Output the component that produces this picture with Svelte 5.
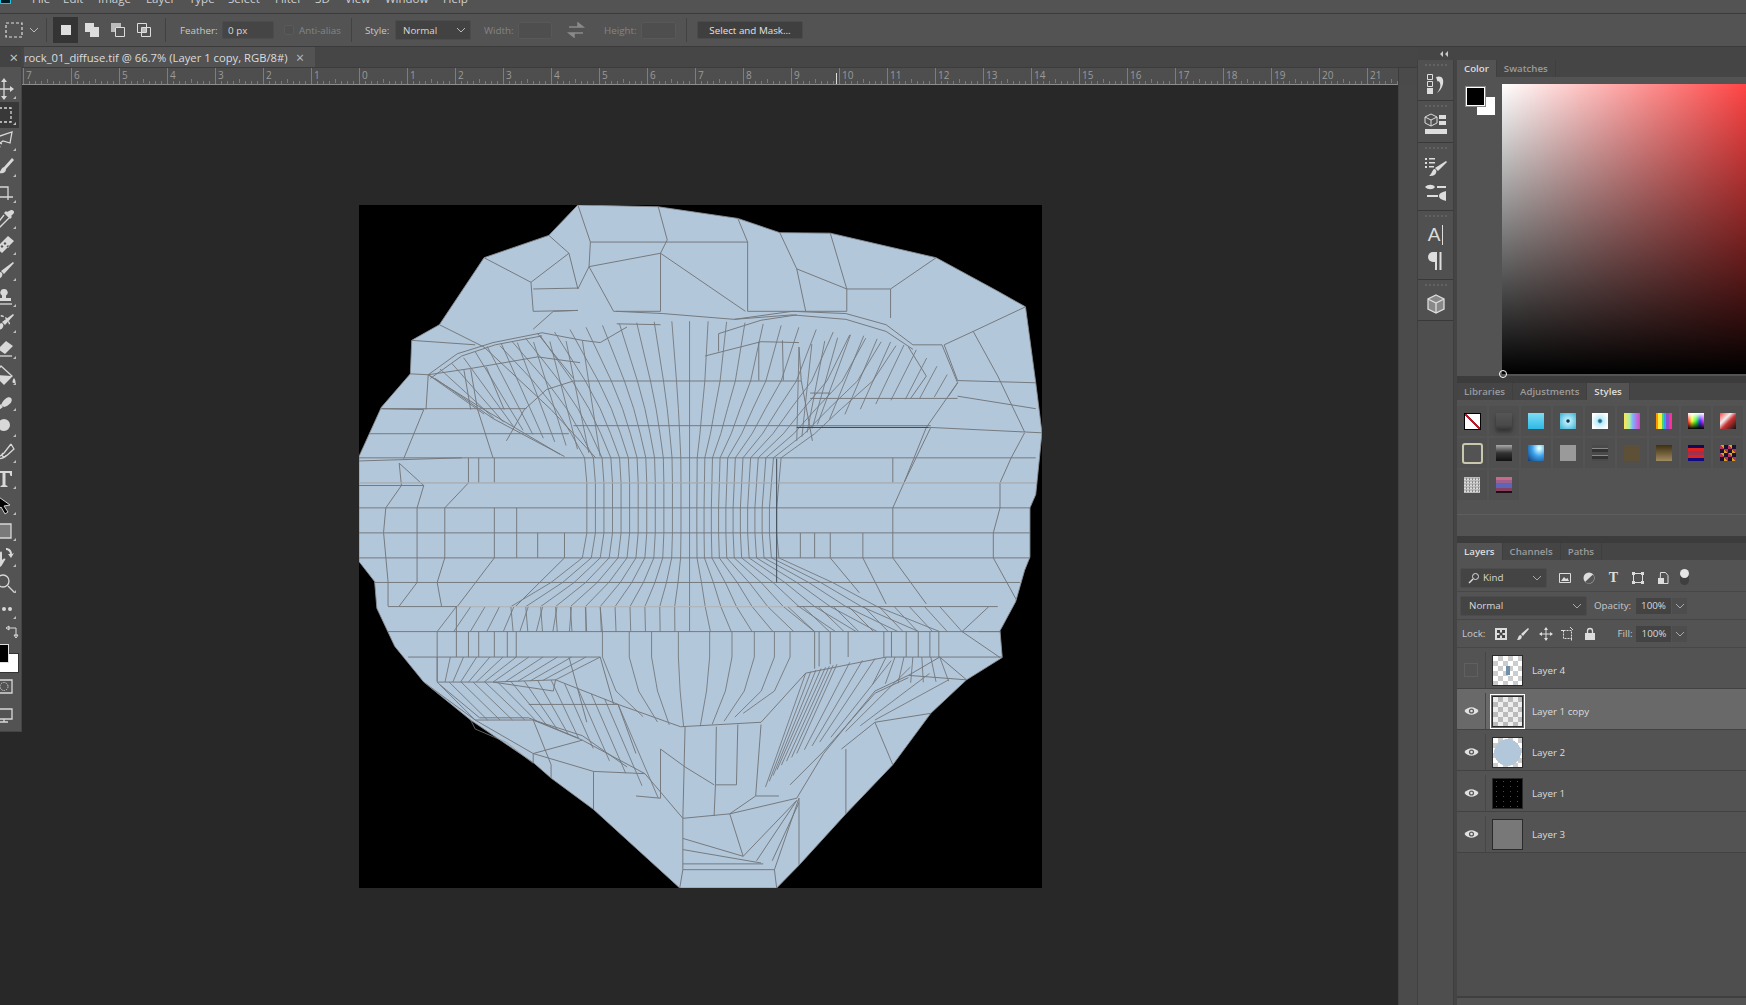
<script>
  const menu = [['File',31],['Edit',35],['Image',48],['Layer',43],['Type',39],['Select',47],['Filter',40],['3D',30],['View',40],['Window',58],['Help',40]];

  const tools = [
    { s:'M10 3v18M1 12h18', f:'M10 1l-3 4h6zM10 23l-3-4h6zM0 12l4-3v6zM20 12l-4-3v6z' },
    { d:'M0 5h17v14H0z', sel:true },
    { s:'M0 9L18 3L16 14L9 12L0 18M5 16c2 2-1 5-3 5M2 12l6 3' },
    { f:'M18 3l2 2-8 9c0 4-4 5-7 4 2-2 2-5 5-6z', d:'M3 7c-3 2-4 8 0 11' },
    { s:'M4 3v13h15M0 6h14v13', w:2 },
    { f:'M17 3a2.5 2.5 0 0 1 3 3l-3 3 1 1-2 2-6-6 2-2 1 1z', s:'M10 8L3 17v3h3l9-9' },
    { f:'M2 15L14 3l6 5L8 20zM11 9l-1.5 1.5L11 12l1.5-1.5zM8 12l-1.5 1.5L8 15l1.500-1.500zM14 12l-1.500 1.500L14 15l1.500-1.500z' },
    { f:'M19 3l1 1-10 11-3-3zM6 13c2 0 3 2 2 4-1 3-5 3-7 2 2-1 2-4 5-6z' },
    { f:'M10 4a3.500 3.500 0 0 1 2 6.500V13h5v3H3v-3h5v-2.500A3.500 3.500 0 0 1 10 4z', s:'M2 19h16' },
    { f:'M19 3l1 1-9 10-3-3zM7 12c2 0 3 2 2 4-1 3-5 3-7 2 2-1 2-4 5-6z', d:'M2 6c4-3 12-1 14 9' },
    { f:'M12 4l7 5-8 8-7-5z', s:'M0 19h18' },
    { s:'M7 3L18 13L10 21L0 11z', f:'M20 15c2 3 2 5 0 5s-2-2 0-5zM2 12L18 13L10 21z' },
    { f:'M7 16c3-7 8-9 10-7s0 7-7 9zM6 15l3 3-4 3-2-2z' },
    { f:'M4 10a6 6 0 1 0 12 0a6 6 0 1 0-12 0z', s:'M6 15l-6 3' },
    { s:'M17 3L10 12C6 16 2 16 0 15M17 3l3 5C15 12 12 18 2 18M9 12a2 2 0 1 0 3 2' },
    { f:'M2 4h16v5h-1.500l-1-3H11.500v12l2 1v1h-7v-1l2-1V6H4.500l-1 3H2z' },
    { k:'M2 2v16l5-4 4 7 3-2-4-6 6-1z' },
    { g:'M-2 5h19v14H-2z' },
    { f:'M0 14c0-3 1-3 2-1V9c0-2 2-2 2 0v-2c0-2 2-2 2 0v1c0-2 2-2 2 0v7c3-3 4-1 3 0l-3 5c-1 2-2 2-4 2-3 0-4-1-4-3zM12 3c3 0 6 2 6 6l2-1-3 5-3-4 2 0c0-2-2-4-4-4z' },
    { s:'M3 10a6 6 0 1 0 12 0a6 6 0 1 0-12 0M14 15l6 6', w:2 },
    { f:'M8 12a2 2 0 1 0 4 0a2 2 0 1 0-4 0zM14 12a2 2 0 1 0 4 0a2 2 0 1 0-4 0z' }
  ];

  const rulerNums = [];
  for (let i = -7; i <= 21; i++) rulerNums.push(i);
  const subTicks = [];
  for (let i = 0; i < 28 * 8 + 6; i++) if (i % 8) subTicks.push(i);

  const outline = '510,12 690,16 868,42 962,74 1075,75 1312,130 1450,205 1512,240 1535,410 1549,522 1535,660 1522,690 1522,800 1510,830 1490,900 1455,965 1460,1025 1380,1075 1300,1150 1215,1265 1110,1375 1005,1490 955,1541 738,1541 545,1365 450,1295 410,1260 270,1165 165,1080 100,1000 60,915 55,855 20,810 20,575 70,465 135,390 138,315 200,280 300,130 445,80';

  const explicit = [
    '510,12 538,95 535,150 510,200','690,16 710,90 695,120 695,250','868,42 890,95 890,250','962,74 1000,155 1020,250',
    '1075,75 1112,200 1112,250','1312,130 1210,200 1210,265','1512,240 1395,295 1330,325','1395,295 1450,395 1510,520',
    '300,130 405,185 410,250','445,80 490,120 510,200','490,120 405,185','538,95 890,95','535,150 695,120 885,250','535,150 590,250 695,250',
    '410,200 510,198','410,250 510,248 455,250 410,290','890,250 1112,250','1000,155 1112,200 1210,200','200,280 300,330','138,315 280,325','135,390 175,392',
    '175,392 240,345 320,320 430,298 520,315 560,320 620,285','595,250 700,255 860,268 990,250 1110,255 1200,280 1260,325 1325,325 1360,410','597,278 695,280','825,300 825,340',
    '795,350 920,318 1005,320','915,318 915,405','968,315 970,405','1005,330 1010,405','1030,433 1075,433','1360,405 1535,410','1360,440 1535,468','1300,510 1549,522',
    '110,590 115,640 80,690 75,745 85,855 85,910','110,590 165,640 150,690 150,857 110,910','165,470 120,580','175,392 170,470','212,690 265,634 265,578','212,690 212,802 195,857 205,911',
    '288,578 288,634','323,578 323,634','323,690 323,802 240,911','373,690 373,802','420,746 420,802','480,746 480,802 370,911',
    '1215,578 1215,634','1215,690 1215,802','1455,634 1455,690 1440,746 1440,802 1500,911','1510,522 1480,578 1455,634','1148,746 1148,802','1075,746 1075,802','1040,746 1040,802','1008,746 1008,802',
    '1215,802 1290,905','1148,802 1200,905','1075,802 1140,880','1240,634 1215,690','1300,510 1240,634',
    '195,967 195,1078','238,911 238,1024','265,967 265,1024','288,967 288,1024','323,967 323,1024','352,967 352,1024','372,967 372,1024',
    '1040,967 1040,1050','1050,967 1050,1045','1075,967 1075,1040','1115,967 1115,1024','1195,967 1195,1024','1212,967 1212,1024','1245,967 1245,1024','1272,967 1272,1024','1298,967 1298,1024','1318,967 1318,1024',
    '1370,967 1455,1025','1370,967 1430,911','1320,1024 1380,1075','165,1080 280,1165 410,1165 520,1210 660,1285 745,1385 850,1375 1000,1340 1060,1240 1175,1100 1250,1065 1320,1024',
    '195,1080 320,1080 460,1075 600,1130 740,1180 920,1170 1020,1060 1200,1024','750,1180 745,1385','820,1180 818,1310 815,1380','920,1175 908,1335 850,1375','868,1175 865,1310','695,1230 695,1340','818,1310 865,1310',
    '745,1385 745,1500 738,1541','955,1541 950,1500 1005,1340','745,1500 950,1500','745,1430 880,1470 1000,1345','850,1375 880,1470','745,1455 920,1485','745,1487 925,1487','910,1480 1000,1345','945,1480 1005,1350','1110,1230 1110,1375','1005,1340 1005,1490','545,1280 545,1365','450,1265 450,1295','410,1240 410,1260',
    '695,1230 750,1270 815,1310','640,1335 695,1340','908,1335 960,1335','1300,1150 1175,1170 1100,1230','1215,1265 1175,1170','1380,1075 1250,1065','20,640 165,640','20,585 250,578','1408,967 1455,967',
    '410,1165 450,1265','520,1210 410,1240 545,1280','660,1285 545,1280','280,1165 410,1240',
    '270,380 285,468 320,578','175,392 270,378 420,352 515,365','300,330 450,470 550,578','420,300 500,400','500,406 440,425 390,470 350,540','255,382 270,470','305,375 345,470','1010,405 1035,540','1360,410 1290,510 1240,634','1330,325 1360,405','1250,330 1290,395 1255,445','70,468 165,470','400,1130 600,1130 640,1240','460,1075 455,1100 320,1080','560,1024 590,1130','490,1024 530,1170',
    '860,268 990,258 1110,268 1200,295 1260,335','825,300 920,270 1000,258','175,392 300,470 470,570','190,400 320,490 480,575','180,400 250,350 325,325 430,305','410,1165 520,1200 620,1270','200,1085 290,1160 400,1160 510,1205','985,1310 1060,1235 1175,1105 1250,1070'
  ];
  const hLines = [[70,395,468],[20,490,524],[500,1300,506],[20,1535,578],[20,1540,634],[20,1522,690],[20,1522,746],[20,1522,802],[55,1500,857],[85,1450,911],[85,1455,967],[130,560,1024],[1200,1460,1024],[500,1010,406],[1030,1360,445],[1000,1300,510]];

  function lerp(ys, vs, y) {
    for (let i = 1; i < ys.length; i++) if (y <= ys[i]) {
      const k = (y - ys[i - 1]) / (ys[i] - ys[i - 1]);
      return vs[i - 1] + k * (vs[i] - vs[i - 1]);
    }
    return vs[vs.length - 1];
  }
  const rowY = [406,468,524,578,634,690,746,802,857,911,967];
  const ctrl = [300,406,468,524,578,634,690,746,802,857,911,967];
  const hL = [450,350,300,265,235,230,230,230,240,310,400,395];
  const hR = [480,410,340,280,205,200,195,195,200,320,420,560];

  const lines = [];
  for (let n = 1; n <= 12; n++) {
    for (const side of [-1, 1]) {
      const t = n / 12;
      const tab = side < 0 ? hL : hR;
      const top = 272 + 55 * t * t;
      const pts = [];
      pts.push(`${760 + side * t * lerp(ctrl, tab, top)},${top}`);
      for (const y of rowY) pts.push(`${(760 + side * t * lerp(ctrl, tab, y)).toFixed(1)},${y}`);
      lines.push(pts.join(' '));
    }
  }
  lines.push('760,272 760,967');
  for (const x of [565,625,675,735,805,855,905,950,985]) {
    const k = (x - 760) / 225;
    lines.push(`${x},967 ${x},1024 ${760 + k * 190},1100 ${760 + k * 120},${1180 - 30 * k * k}`);
  }

  function sample(poly, s) {
    const p = s * (poly.length - 1), i = Math.min(Math.floor(p), poly.length - 2), k = p - i;
    return [poly[i][0] + k * (poly[i + 1][0] - poly[i][0]), poly[i][1] + k * (poly[i + 1][1] - poly[i][1])];
  }
  function fan(a, b, n) {
    for (let j = 0; j <= n; j++) {
      const s = j / n, p = sample(a, s), q = sample(b, s);
      lines.push(`${p[0].toFixed(1)},${p[1].toFixed(1)} ${q[0].toFixed(1)},${q[1].toFixed(1)}`);
    }
  }
  fan([[930,1315],[960,1270],[1000,1240],[1060,1210],[1175,1165]], [[1020,1060],[1060,1048],[1090,1040],[1190,1025],[1340,1075]], 14);
  fan([[195,1080],[320,1080],[460,1075],[600,1130]], [[280,1165],[410,1165],[520,1210],[690,1340]], 14);
  fan([[175,392],[320,322],[520,315]], [[300,480],[420,530],[560,575]], 11);
  fan([[1005,330],[1130,300],[1260,330],[1360,410]], [[1000,540],[1050,500],[1200,450],[1340,440]], 13);
  fan([[238,911],[560,911]], [[195,967],[565,967]], 10);
  fan([[400,1024],[560,1024]], [[320,1080],[460,1075]], 5);
  fan([[980,911],[1320,911]], [[1040,967],[1370,967]], 10);
  fan([[372,1024],[195,1024]], [[300,1080],[195,1080]], 6);
  fan([[1200,1024],[1320,1024]], [[1170,1085],[1340,1078]], 6);
</script>

<div class="app">
  <div class="menubar">
    <div class="logo"></div>
    {#each menu as [label, w]}
      <span class="menuitem" style:width="{w}px">{label}</span>
    {/each}
  </div>

  <div class="options">
    <svg class="mq" width="18" height="18" viewBox="0 0 18 18"><path d="M1 2h16v14H1z" fill="none" stroke="#ddd" stroke-width="1.200" stroke-dasharray="3 2"/></svg>
    <svg class="chev" width="10" height="8" viewBox="0 0 10 8"><path d="M1 2l4 4 4-4" fill="none" stroke="#bbb"/></svg>
    <span class="sep s1"></span>
    <div class="modes">
      <span class="mode on"><svg width="16" height="16" viewBox="0 0 16 16"><rect x="3" y="3" width="10" height="10" fill="#ddd"/></svg></span>
      <span class="mode"><svg width="16" height="16" viewBox="0 0 16 16"><path d="M1 1h9v4h5v10H6v-5H1z" fill="#ddd"/></svg></span>
      <span class="mode"><svg width="16" height="16" viewBox="0 0 16 16"><path d="M1 1h10v4H5v5H1z" fill="#bbb"/><path d="M5.500 5.500h9v9h-9z" fill="none" stroke="#ddd"/></svg></span>
      <span class="mode"><svg width="16" height="16" viewBox="0 0 16 16"><path d="M1.500 1.500h9v9h-9zM5.500 5.500h9v9h-9z" fill="none" stroke="#ddd"/><path d="M6 6h4v4H6z" fill="#bbb"/></svg></span>
    </div>
    <span class="sep s2"></span>
    <span class="lbl feather">Feather:</span>
    <span class="inp feather-in">0 px</span>
    <span class="check"></span>
    <span class="lbl dim aa">Anti-alias</span>
    <span class="sep s3"></span>
    <span class="lbl style">Style:</span>
    <span class="inp select">Normal<svg width="10" height="8" viewBox="0 0 10 8"><path d="M1 2l4 4 4-4" fill="none" stroke="#bbb"/></svg></span>
    <span class="lbl dim width">Width:</span>
    <span class="inp ghost w1"></span>
    <svg class="swap" width="20" height="16" viewBox="0 0 20 16"><path d="M3 5h11M12 1l5 4H12zM17 11H6M8 15l-5-4h5z" fill="#8a8a8a" stroke="#8a8a8a" stroke-width="1.500"/></svg>
    <span class="lbl dim height">Height:</span>
    <span class="inp ghost w2"></span>
    <span class="sep s4"></span>
    <span class="btn">Select and Mask...</span>
  </div>

  <div class="main">
    <div class="workspace">
      <div class="tabbar"><div class="tabgap"></div><div class="tab">rock_01_diffuse.tif @ 66.7% (Layer 1 copy, RGB/8#)<span class="tabx">×</span></div></div>
      <div class="rulerrow">
        <svg class="ruler" width="1376" height="17" viewBox="0 0 1376 17">
          {#each rulerNums as n, i}
            <path d="M{1.500 + i * 48} 0v17" stroke="#7d7d7d"/>
            <text x={4 + i * 48} y="11">{Math.abs(n)}</text>
          {/each}
          {#each subTicks as i}
            <path d="M{1.500 + i * 6} {i % 4 === 0 ? 11 : 13}v4" stroke="#7a7a7a"/>
          {/each}
          <path d="M814.500 5v12" stroke="#ddd"/>
          <path d="M0 16.500h1376" stroke="#8c8c8c"/>
        </svg>
        <div class="rulerend"></div>
      </div>
      <div class="stagerow">
        <div class="stage">
          <svg class="doc" width="683" height="683" viewBox="20 12 1529 1529">
            <defs><clipPath id="rock"><polygon points={outline}/></clipPath></defs>
            <rect x="20" y="12" width="1529" height="1529" fill="#000"/>
            <polygon points={outline} fill="#b3c7db" stroke="#8a8f94" stroke-width="2"/>
            <g clip-path="url(#rock)" fill="none" stroke="#74787c" stroke-width="2.200">
              {#each hLines as [a, b, y]}
                <path d="M{a} {y}H{b}"/>
              {/each}
              {#each lines as p}
                <polyline points={p} stroke-width="2"/>
              {/each}
              {#each explicit as p}
                <polyline points={p}/>
              {/each}
              <path d="M20 634H1540M240 911H1000" stroke="#dfe6ec" stroke-width="1.300"/>
              <path d="M1000 510H1295M955 580V857" stroke="#3d4a57" stroke-width="2.200"/>
            </g>
            <polyline points="270,1165 280,1185 350,1215 410,1262" fill="none" stroke="#8f8f8f" stroke-width="1.500"/>
          </svg>
        </div>
        <div class="vscroll"></div>
      </div>

      <div class="toolbar">
        <div class="toolhead"><span>×</span></div>
        <div class="grip"></div>
        {#each tools as t}
          <div class="tool" class:selected={t.sel}>
            <svg width="24" height="24" viewBox="0 0 24 24">
              {#if t.f}<path class="tf" d={t.f}/>{/if}
              {#if t.s}<path class="ts" d={t.s} stroke-width={t.w || 1.300}/>{/if}
              {#if t.d}<path class="td" d={t.d}/>{/if}
              {#if t.k}<path class="tk" d={t.k}/>{/if}
              {#if t.g}<path class="tg" d={t.g}/>{/if}
              <path class="tc" d="M22 19v3h-3z"/>
            </svg>
          </div>
        {/each}
        <div class="swaprow"><svg width="14" height="14" viewBox="0 0 14 14"><path d="M3 3h8v8M1 3l3-2v4zM11 13l-2-3h4z" fill="none" stroke="#ddd"/></svg></div>
        <div class="colors"><span class="bgc"></span><span class="fgc"></span></div>
        <div class="tool plain"><svg width="24" height="24" viewBox="0 0 24 24"><path class="ts" d="M-2 5h20v13H-2z"/><circle cx="10" cy="11.500" r="4" fill="none" stroke="#ccc" stroke-dasharray="1.500 1"/></svg></div>
        <div class="tool plain"><svg width="24" height="24" viewBox="0 0 24 24"><path class="ts" d="M2 6h16v10H2zM6 19h8M10 16v3"/></svg></div>
      </div>
    </div>

    <div class="right">
      <div class="collapse"><svg width="10" height="8" viewBox="0 0 10 8"><path d="M4 1L1 4l3 3zM9 1L6 4l3 3z" fill="#c8c8c8"/></svg></div>
      <div class="columns">
        <div class="dock">
          <div class="group g1">
            <i class="dgrip"></i>
            <svg width="24" height="24" viewBox="0 0 24 24"><path d="M3.500 2.500h5v5h-5zM3.500 9.500h5v5h-5z" fill="none" stroke="#ddd"/><path d="M3 16h6v6H3z" fill="#ddd"/><path d="M12 5c6-2 8 2 7 7-1 4-3 7-6 9 3-4 4-7 3-10-1-2-2-2-3-2l1 2z" fill="#ddd"/></svg>
          </div>
          <div class="group g2">
            <i class="dgrip"></i>
            <svg width="26" height="22" viewBox="0 0 26 22"><path d="M8 1l6 3v6l-6 3-6-3V4zM2 4l6 3 6-3M8 7v6" fill="none" stroke="#ddd"/><path d="M16 2h7v4h-7zM16 8h7v4h-7zM2 16h22v5H2z" fill="#ddd"/></svg>
          </div>
          <div class="group g3">
            <i class="dgrip"></i>
            <svg width="24" height="24" viewBox="0 0 24 24"><path d="M1 3h2v2H1zM1 7h2v2H1zM1 11h2v2H1zM5 3h6v1.500H5zM5 7h6v1.500H5zM5 11h5v1.500H5zM22 6l1 1-9 9-3-3zM10 14c2 0 3 2 2 4-1 3-5 3-7 3 2-1 3-5 5-7z" fill="#ddd"/></svg>
            <svg width="24" height="24" viewBox="0 0 24 24"><path d="M1 6c3-3 8-3 10 0-2 3-7 3-10 0zM13 5h9v2h-9zM3 14h11v2H3zM22 10v10c-3-1-7-2-7-5s4-4 7-5z" fill="#ddd"/></svg>
          </div>
          <div class="group g4">
            <i class="dgrip"></i>
            <span class="chr">A<b></b></span>
            <svg width="24" height="24" viewBox="0 0 24 24"><path d="M12 3v18M16.500 3v18" stroke="#ddd" stroke-width="2"/><path d="M12 3H9a5 5 0 0 0 0 10h3z" fill="#ddd"/></svg>
          </div>
          <div class="group g5">
            <i class="dgrip"></i>
            <svg width="24" height="24" viewBox="0 0 24 24"><path d="M12 3l8 4v10l-8 4-8-4V7z" fill="#888"/><path d="M12 3l8 4v10l-8 4-8-4V7zM4 7l8 4 8-4M12 11v10" fill="none" stroke="#ddd" stroke-width="1.300"/></svg>
          </div>
          <div class="group g6"></div>
        </div>

        <div class="panels">
          <section class="colorpanel">
            <div class="tabs">
              <span class="ptab on">Color</span><span class="ptab">Swatches</span>
            </div>
            <div class="colorbody">
              <div class="chips"><span class="chipb"></span><span class="chipf"></span></div>
              <div class="picker"><i class="ring"></i></div>
            </div>
          </section>

          <section class="stylespanel">
            <div class="tabs">
              <span class="ptab">Libraries</span><span class="ptab">Adjustments</span><span class="ptab on">Styles</span>
            </div>
            <div class="stylegrid">
              {#each Array(20) as _, i}
                <div class="cell"><span class="sw sw{i}"></span></div>
              {/each}
            </div>
            <div class="stylefoot"></div>
          </section>

          <section class="layerspanel">
            <div class="tabs">
              <span class="ptab on">Layers</span><span class="ptab">Channels</span><span class="ptab">Paths</span>
            </div>
            <div class="lrow filter">
              <span class="inp kind"><svg width="12" height="12" viewBox="0 0 12 12"><circle cx="7.500" cy="4.500" r="3" fill="none" stroke="#ddd"/><path d="M5 7L1 11" stroke="#ddd" stroke-width="1.500"/></svg>Kind<svg class="caret" width="10" height="8" viewBox="0 0 10 8"><path d="M1 2l4 4 4-4" fill="none" stroke="#aaa"/></svg></span>
              <svg class="fi" width="14" height="12" viewBox="0 0 14 12"><path d="M1.500 1.500h11v9h-11z" fill="none" stroke="#ddd"/><path d="M3 9l3-4 2 2 1.500-1L11 9z" fill="#ddd"/></svg>
              <svg class="fi" width="14" height="14" viewBox="0 0 14 14"><circle cx="7" cy="7" r="5.500" fill="#ddd"/><path d="M11 3.500A5.500 5.500 0 0 1 3 11z" fill="#555"/></svg>
              <span class="fi t">T</span>
              <svg class="fi" width="14" height="14" viewBox="0 0 14 14"><path d="M2.500 2.500h9v9h-9z" fill="none" stroke="#ddd"/><path d="M1 1h3v3H1zM10 1h3v3h-3zM1 10h3v3H1zM10 10h3v3h-3z" fill="#ddd"/></svg>
              <svg class="fi" width="14" height="14" viewBox="0 0 12 14"><path d="M3.500 1.500h5l2.500 3v8h-8z" fill="none" stroke="#ddd"/><path d="M1 7h6v6H1z" fill="#ddd"/></svg>
              <span class="toggle"><i></i></span>
            </div>
            <div class="lrow blend">
              <span class="inp blendsel">Normal<svg class="caret" width="10" height="8" viewBox="0 0 10 8"><path d="M1 2l4 4 4-4" fill="none" stroke="#aaa"/></svg></span>
              <span class="lbl op">Opacity:</span>
              <span class="pct">100%</span><span class="pctc"><svg width="10" height="8" viewBox="0 0 10 8"><path d="M1 2l4 4 4-4" fill="none" stroke="#aaa"/></svg></span>
            </div>
            <div class="lrow lock">
              <span class="lbl lk">Lock:</span>
              <svg class="li" width="14" height="12" viewBox="0 0 12 12"><rect width="12" height="12" fill="#ddd"/><path d="M2 2h3v3H2zM7 2h3v3H7zM4.500 4.500h3v3h-3zM2 7h3v3H2zM7 7h3v3H7z" fill="#444"/></svg>
              <svg class="li" width="14" height="14" viewBox="0 0 14 14"><path d="M12 1l1 1-6 7-2-2zM4 8c2 0 2 2 1.500 3-1 2-3 2-4.500 2 1-1 1-4 3-5z" fill="#ddd"/></svg>
              <svg class="li" width="14" height="14" viewBox="0 0 14 14"><path d="M7 1v12M1 7h12" stroke="#ddd"/><path d="M7 0L5 3h4zM7 14l-2-3h4zM0 7l3-2v4zM14 7l-3-2v4z" fill="#ddd"/></svg>
              <svg class="li" width="14" height="14" viewBox="0 0 14 14"><path d="M2.500 3.500h8v8h-8z" fill="none" stroke="#ddd" stroke-dasharray="2 1"/><path d="M0 3.500h3M10.500 13.500v-3M9 0l3 3" stroke="#ddd"/></svg>
              <svg class="li" width="14" height="14" viewBox="0 0 12 14"><path d="M1 6h10v7H1z" fill="#ddd"/><path d="M3.500 6V4a2.500 2.500 0 0 1 5 0v2" fill="none" stroke="#ddd" stroke-width="1.300"/></svg>
              <span class="lbl fl">Fill:</span>
              <span class="pct">100%</span><span class="pctc"><svg width="10" height="8" viewBox="0 0 10 8"><path d="M1 2l4 4 4-4" fill="none" stroke="#aaa"/></svg></span>
            </div>
            {#each [['Layer 4','th4',false,false],['Layer 1 copy','th1c',true,true],['Layer 2','th2',true,false],['Layer 1','th1',true,false],['Layer 3','th3',true,false]] as [name, th, vis, active]}
              <div class="layer" class:active>
                <div class="eye">
                  {#if vis}
                    <svg width="15" height="10" viewBox="0 0 15 10"><path d="M0.500 5C4 0 11 0 14.500 5 11 10 4 10 0.500 5z" fill="#e2e2e2"/><circle cx="7.500" cy="5" r="2.600" fill="#5a5a5a"/><circle cx="7.500" cy="5" r="1.300" fill="#e2e2e2"/></svg>
                  {:else}
                    <span class="noeye"></span>
                  {/if}
                </div>
                <div class="thumb {th}">
                  {#if th === 'th1c'}<i class="cor"></i>{/if}
                </div>
                <span class="lname">{name}</span>
              </div>
            {/each}
            <div class="layerfoot"></div>
            <div class="panelend"></div>
          </section>
        </div>
      </div>
    </div>
  </div>
</div>

<style>
  :global(body) { margin: 0; background: #535353; }
  .app { width: 1746px; height: 1005px; overflow: hidden; display: flex; flex-direction: column; background: #535353; font-family: "Open Sans", "Noto Sans", sans-serif; font-size: 11px; color: #d6d6d6; }

  .menubar { height: 13px; flex: none; display: flex; overflow: hidden; border-bottom: 1px solid #3a3a3a; padding-left: 32px; position: relative; align-items: flex-end; line-height: 16px; font-size: 11.5px; color: #d0d0d0; }
  .menuitem { flex: none; transform: translateY(-6px); }
  .logo { position: absolute; left: 0; top: -6px; width: 9px; height: 8px; background: #001d26; border: 1px solid #1cc4e6; }

  .options { height: 32px; flex: none; display: flex; align-items: center; padding-left: 5px; border-bottom: 1px solid #3a3a3a; background: #535353; }
  .chev { margin-left: 6px; }
  .sep { width: 1px; height: 24px; background: #424242; flex: none; }
  .s1 { margin-left: 7px; }
  .modes { display: flex; margin-left: 6px; }
  .mode { width: 26px; height: 26px; display: flex; align-items: center; justify-content: center; }
  .mode.on { background: #343434; width: 25px; margin-right: 1px; }
  .s2 { margin-left: 8px; }
  .lbl { flex: none; white-space: nowrap; font-size: 9.8px; color: #c8c8c8; }
  .dim { color: #858585; }
  .feather { margin-left: 14px; width: 36px; }
  .inp { flex: none; box-sizing: border-box; background: #444; border: 1px solid #4c4c4c; border-radius: 2px; color: #d8d8d8; font-size: 9.8px; display: flex; align-items: center; justify-content: space-between; padding: 0 5px; }
  .feather-in { margin-left: 6px; width: 52px; height: 18px; background: #454545; }
  .check { margin-left: 10px; width: 10px; height: 10px; background: #505050; border: 1px solid #5a5a5a; box-sizing: border-box; border-radius: 2px; }
  .aa { margin-left: 5px; width: 39px; }
  .s3 { margin-left: 13px; }
  .style { margin-left: 13px; width: 24px; }
  .select { margin-left: 6px; width: 76px; height: 20px; background: #424242; padding: 0 4px 0 7px; }
  .width { margin-left: 13px; width: 28px; }
  .ghost { background: #4e4e4e; border-color: #585858; height: 17px; }
  .w1 { margin-left: 6px; width: 34px; }
  .swap { margin-left: 14px; }
  .height { margin-left: 18px; width: 32px; }
  .w2 { margin-left: 5px; width: 35px; }
  .s4 { margin-left: 10px; }
  .btn { margin-left: 10px; width: 106px; height: 18px; box-sizing: border-box; background: #3f3f3f; border: 1px solid #4b4b4b; border-radius: 2px; display: flex; align-items: center; justify-content: center; font-size: 9.8px; color: #e2e2e2; }

  .main { flex: 1; display: flex; min-height: 0; }
  .workspace { width: 1417px; flex: none; position: relative; display: flex; flex-direction: column; background: #282828; }
  .tabbar { height: 20px; flex: none; display: flex; background: #464646; border-bottom: 1px solid #3c3c3c; padding-left: 22px; }
  .tabgap { width: 2px; }
  .tab { width: 291px; box-sizing: border-box; background: #535353; font-size: 11.25px; line-height: 22px; color: #dcdcdc; white-space: nowrap; position: relative; }
  .tabx { position: absolute; left: 272px; top: 0; font-size: 14px; color: #bbb; }

  .rulerrow { height: 17px; flex: none; display: flex; padding-left: 22px; background: #4e4e4e; }
  .ruler { display: block; flex: none; }
  .ruler text { font-size: 10px; fill: #9a9a9a; font-family: "Open Sans", sans-serif; }
  .rulerend { flex: 1; background: #4a4a4a; border-left: 1px solid #3c3c3c; }

  .stagerow { flex: 1; display: flex; min-height: 0; }
  .stage { flex: 1; min-width: 0; display: flex; align-items: center; justify-content: center; padding: 3px 0 0 2px; }
  .doc { display: block; flex: none; }
  .vscroll { width: 18px; flex: none; background: #4b4b4b; border-left: 1px solid #424242; }

  .toolbar { position: absolute; left: 0; top: 0; width: 22px; height: 685px; box-sizing: border-box; background: #535353; border-right: 1px solid #444; border-bottom: 1px solid #444; overflow: hidden; }
  .toolhead { height: 20px; background: #434343; color: #c8c8c8; font-size: 15px; line-height: 20px; text-align: right; padding-right: 3px; box-sizing: border-box; }
  .grip { height: 9px; }
  .tool { height: 26px; display: flex; align-items: center; }
  .tool svg { flex: none; margin-left: -6px; }
  .tool.selected { background: #383838; width: 19px; }
  .tf { fill: #d8d8d8; }
  .ts { fill: none; stroke: #d8d8d8; stroke-width: 1.300; }
  .td { fill: none; stroke: #d8d8d8; stroke-width: 1.300; stroke-dasharray: 3 2; }
  .tk { fill: #000; stroke: #d0d0d0; stroke-width: 1; }
  .tg { fill: #7a7a7a; stroke: #d8d8d8; stroke-width: 1.300; }
  .tc { fill: #bdbdbd; }
  .swaprow { height: 19px; display: flex; align-items: center; padding-left: 5px; }
  .colors { height: 32px; position: relative; }
  .fgc { position: absolute; left: -3px; top: 3px; width: 10px; height: 17px; background: #000; border: 1px solid #ddd; }
  .bgc { position: absolute; left: -1px; top: 12px; width: 18px; height: 18px; background: #fff; border: 1px solid #333; }
  .plain { height: 28px; }

  .right { flex: 1; min-width: 0; display: flex; flex-direction: column; background: #444; }
  .collapse { height: 13px; flex: none; background: #454545; display: flex; align-items: center; padding-left: 22px; }
  .columns { flex: 1; min-height: 0; display: flex; }
  .dock { width: 37px; flex: none; margin-right: 3px; display: flex; flex-direction: column; background: #4b4b4b; border-left: 1px solid #3f3f3f; border-right: 1px solid #3f3f3f; box-sizing: border-box; }
  .group { flex: none; display: flex; flex-direction: column; align-items: center; gap: 2px; border-bottom: 1px solid #393939; box-sizing: border-box; background: #505050; }
  .g1 { height: 41px; } .g2 { height: 42px; } .g3 { height: 68px; } .g4 { height: 69px; } .g5 { height: 41px; } .g6 { flex: 1; border-bottom: 0; background: #4e4e4e; }
  .dgrip { width: 22px; height: 4px; margin-top: 4px; margin-bottom: 2px; border-top: 2px dotted #626262; box-sizing: border-box; flex: none; }
  .chr { height: 24px; display: flex; align-items: center; font-size: 19px; color: #ddd; font-family: "Liberation Sans", sans-serif; }
  .chr b { display: inline-block; width: 1px; height: 20px; background: #ddd; margin-left: 2px; }

  .panels { flex: 1; min-width: 0; display: flex; flex-direction: column; background: #3c3c3c; }
  section { background: #535353; flex: none; }
  .tabs { height: 17px; display: flex; background: #454545; }
  .ptab { padding: 0 7px; line-height: 17px; font-size: 9.7px; color: #9b9b9b; border-right: 1px solid #3f3f3f; font-weight: 600; white-space: nowrap; }
  .ptab.on { background: #535353; color: #dedede; }

  .colorpanel { height: 316px; }
  .colorbody { display: flex; height: 299px; padding-top: 7px; box-sizing: border-box; }
  .chips { width: 45px; flex: none; position: relative; }
  .chipb { position: absolute; left: 20px; top: 13px; width: 18px; height: 18px; background: #fff; }
  .chipf { position: absolute; left: 9px; top: 3px; width: 17px; height: 17px; background: #000; border: 1px solid #fff; outline: 1px solid #888; }
  .picker { flex: 1; height: 290px; position: relative; background: linear-gradient(to bottom, rgba(0,0,0,0) 0%, #000 100%), linear-gradient(to right, #fff 0%, #f44 100%); }
  .ring { position: absolute; left: -3px; top: 286px; width: 6px; height: 6px; border: 1px solid #fff; border-radius: 50%; }

  .stylespanel { margin-top: 7px; height: 153px; }
  .stylegrid { display: grid; grid-template-columns: repeat(9, 30px); grid-auto-rows: 30px; gap: 2px; padding-top: 6px; height: 114px; box-sizing: border-box; }
  .cell { background: #4f4f4f; display: flex; align-items: center; justify-content: center; }
  .stylefoot { border-top: 1px solid #5e5e5e; }
  .sw { width: 16px; height: 16px; display: block; }
  .sw0 { background: linear-gradient(to top right, #fff 44%, #b01c2a 45%, #b01c2a 55%, #fff 56%); outline: 1px solid #000; width: 15px; height: 15px; }
  .sw1 { background: linear-gradient(#555, #4a4a4a 75%, #3a3a3a); box-shadow: 0 3px 4px #333; }
  .sw2 { background: linear-gradient(#7fdcf5, #2cb9e6); }
  .sw3 { background: radial-gradient(circle, #0b3a4d 10%, #b9ecfb 20%, #46b7d6 90%); }
  .sw4 { background: radial-gradient(circle, #1b6a8a 10%, #b9ecfb 25%, #fff 80%); }
  .sw5 { background: linear-gradient(to right, #ffe25a, #a6f0a0 35%, #7fb0ff 55%, #e040c0); }
  .sw6 { background: linear-gradient(to right, #ff9800 0 15%, #ffeb3b 15% 35%, #4fd060 35% 50%, #29a6e8 50% 65%, #8a4fd0 65% 80%, #ff3090 80%); }
  .sw7 { background: linear-gradient(to bottom, #fff, rgba(255,255,255,0) 50%, #000), linear-gradient(to right, #f33, #ff3, #3f3, #33f, #f3f); }
  .sw8 { background: linear-gradient(135deg, #f44, #eee 35%, #c33 55%, #111); }
  .sw9 { background: #535353; border: 2px solid #c9c8ad; border-radius: 3px; width: 17px; height: 17px; box-sizing: content-box; }
  .sw10 { background: linear-gradient(#aaa, #333 50%, #111); }
  .sw11 { background: radial-gradient(ellipse at 70% 20%, #dff 5%, #3aa0ee 45%, #123a6a); }
  .sw12 { background: #9a9a9a; }
  .sw13 { background: repeating-linear-gradient(#4a4a4a 0 3px, #888 3px 4px, #333 4px 7px); }
  .sw14 { background: #5d5036; }
  .sw15 { background: linear-gradient(#3d2f10, #a08a62); }
  .sw16 { background: linear-gradient(#120a55 0 20%, #d22 20% 35%, #a03050 35% 65%, #d22 65% 80%, #120a80 80%); }
  .sw17 { background: repeating-conic-gradient(#201030 0 25%, #b33060 25% 40%, #d8a030 40% 50%) 0 0 / 8px 8px; }
  .sw18 { background: repeating-conic-gradient(#bbb 0 25%, #888 25% 50%, #ddd 50% 75%, #999 75%) 0 0 / 3px 3px; }
  .sw19 { background: linear-gradient(#c86a8a 0 20%, #a0608f 20% 40%, #5a66b8 40% 70%, #8a4060 70% 85%, #1a1015 85%); }

  .layerspanel { margin-top: 7px; flex: 1; display: flex; flex-direction: column; }
  .lrow { display: flex; align-items: center; box-sizing: border-box; flex: none; border-bottom: 1px solid #474747; padding-left: 3px; }
  .filter { height: 32px; padding-top: 4px; }
  .kind { width: 87px; height: 20px; padding: 0 4px 0 7px; justify-content: flex-start; gap: 3px; background: #444; }
  .caret { margin-left: auto; }
  .fi { margin-left: 10.500px; flex: none; width: 14px; }
  .t { font-family: "Liberation Serif", serif; font-weight: 700; font-size: 14px; line-height: 14px; color: #ddd; text-align: center; }
  .toggle { margin-left: 10px; width: 9px; height: 16px; background: #3f3f3f; border-radius: 5px; position: relative; margin-top: -2px; }
  .toggle i { position: absolute; left: 0; top: 0; width: 9px; height: 9px; background: #e4e4e4; border-radius: 50%; }
  .blend { height: 28px; }
  .blendsel { width: 127px; height: 20px; padding: 0 4px 0 8px; background: #444; }
  .op { margin-left: 7px; width: 39px; }
  .pct { margin-left: 3px; width: 35px; height: 16px; line-height: 16px; background: #434343; font-size: 9.800px; text-align: center; color: #d8d8d8; flex: none; }
  .pctc { width: 15px; height: 16px; background: #4d4d4d; display: flex; align-items: center; justify-content: center; flex: none; margin-left: 1px; }
  .lock { height: 28px; }
  .lk { width: 28px; margin-left: 2px; margin-right: 4px; }
  .li { margin-right: 8.300px; flex: none; }
  .fl { margin-left: 12px; width: 16px; }
  .layer { height: 41px; flex: none; display: flex; align-items: center; box-sizing: border-box; border-bottom: 1px solid #424242; padding-top: 4px; }
  .layer.active { background: #696969; color: #eee; }
  .eye { width: 29px; height: 100%; box-sizing: border-box; border-right: 1px solid #474747; display: flex; align-items: center; justify-content: center; flex: none; }
  .noeye { width: 12px; height: 12px; border: 1px solid #606060; display: block; }
  .thumb { margin-left: 6px; width: 31px; height: 31px; box-sizing: border-box; border: 1px solid #2a2a2a; position: relative; flex: none; background-color: #fff; background-image: conic-gradient(#ccc 25%, #fff 25% 50%, #ccc 50% 75%, #fff 75%); background-size: 10px 10px; }
  .th4::after { content: ""; position: absolute; left: 13px; top: 10px; width: 4px; height: 9px; background: #6f8fa8; }
  .th1c { background-image: conic-gradient(#bbb 25%, #eee 25% 50%, #bbb 50% 75%, #eee 75%); }
  .cor { position: absolute; left: -3px; top: -3px; right: -3px; bottom: -3px; border: 1px solid #fff; }
  .th2 { background-image: radial-gradient(ellipse at 50% 50%, #b3c7db 0 64%, rgba(0,0,0,0) 66%), conic-gradient(#ccc 25%, #fff 25% 50%, #ccc 50% 75%, #fff 75%); background-size: 100% 100%, 10px 10px; }
  .th1 { background-color: #000; background-image: radial-gradient(#4a4a4a 0.500px, transparent 1px); background-size: 7px 5px; }
  .th3 { background: #787878; }
  .lname { margin-left: 9px; font-size: 9.800px; color: #dcdcdc; white-space: nowrap; }
  .layerfoot { height: 145px; flex: none; background: #4e4e4e; border-bottom: 2px solid #3f3f3f; box-sizing: border-box; }
  .panelend { flex: 1; }
</style>
